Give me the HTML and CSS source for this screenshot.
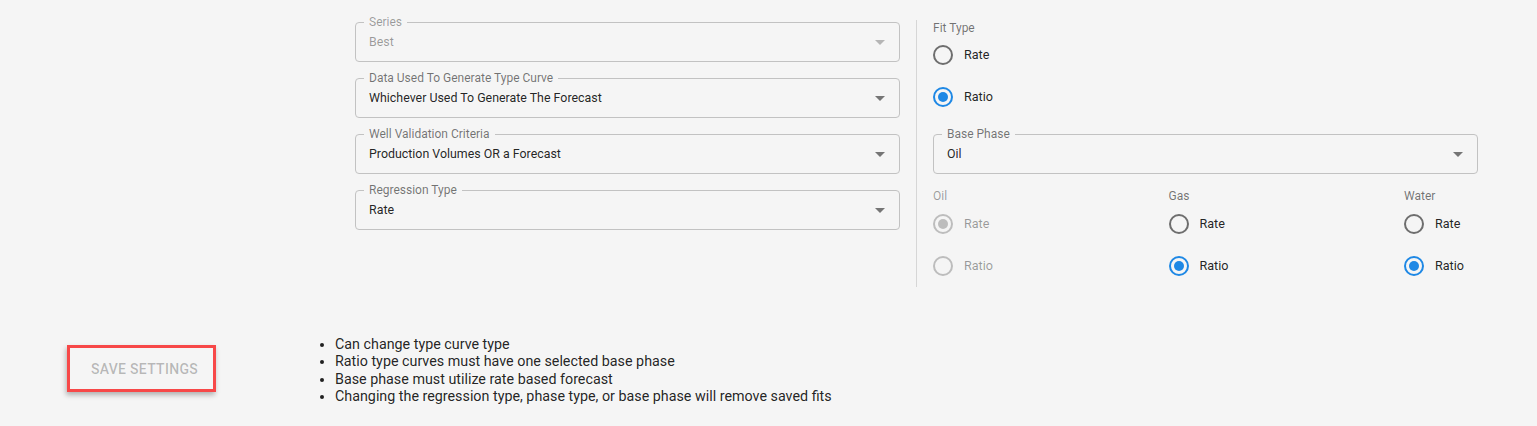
FILE: index.html
```html
<!DOCTYPE html>
<html>
<head>
<meta charset="utf-8">
<link rel="stylesheet" href="styles.css">
</head>
<body>
<div class="page">
  <div class="form">
    <div class="col-left">
      <div class="select disabled">
        <span class="select-label">Series</span>
        <span class="select-value">Best</span>
        <span class="arrow"></span>
      </div>
      <div class="select">
        <span class="select-label">Data Used To Generate Type Curve</span>
        <span class="select-value">Whichever Used To Generate The Forecast</span>
        <span class="arrow"></span>
      </div>
      <div class="select">
        <span class="select-label">Well Validation Criteria</span>
        <span class="select-value">Production Volumes OR a Forecast</span>
        <span class="arrow"></span>
      </div>
      <div class="select">
        <span class="select-label">Regression Type</span>
        <span class="select-value">Rate</span>
        <span class="arrow"></span>
      </div>
    </div>
    <div class="divider"></div>
    <div class="col-right">
      <div class="group-label">Fit Type</div>
      <div class="radio-row"><span class="radio"></span><span class="radio-text">Rate</span></div>
      <div class="radio-row"><span class="radio checked"></span><span class="radio-text">Ratio</span></div>
      <div class="select base">
        <span class="select-label">Base Phase</span>
        <span class="select-value">Oil</span>
        <span class="arrow"></span>
      </div>
      <div class="phases">
        <div class="phase disabled">
          <div class="group-label">Oil</div>
          <div class="radio-row"><span class="radio checked"></span><span class="radio-text">Rate</span></div>
          <div class="radio-row"><span class="radio"></span><span class="radio-text">Ratio</span></div>
        </div>
        <div class="phase">
          <div class="group-label">Gas</div>
          <div class="radio-row"><span class="radio"></span><span class="radio-text">Rate</span></div>
          <div class="radio-row"><span class="radio checked"></span><span class="radio-text">Ratio</span></div>
        </div>
        <div class="phase">
          <div class="group-label">Water</div>
          <div class="radio-row"><span class="radio"></span><span class="radio-text">Rate</span></div>
          <div class="radio-row"><span class="radio checked"></span><span class="radio-text">Ratio</span></div>
        </div>
      </div>
    </div>
  </div>
  <div class="bottom">
    <div class="save-btn">SAVE SETTINGS</div>
    <ul class="notes">
      <li>Can change type curve type</li>
      <li>Ratio type curves must have one selected base phase</li>
      <li>Base phase must utilize rate based forecast</li>
      <li>Changing the regression type, phase type, or base phase will remove saved fits</li>
    </ul>
  </div>
</div>
</body>
</html>
```

FILE: styles.css
```css
html, body {
  margin: 0;
  padding: 0;
  background: #f5f5f5;
}
body {
  font-family: Roboto, "Liberation Sans", Arial, sans-serif;
  color: rgba(0, 0, 0, 0.87);
  width: 1537px;
  height: 426px;
  overflow: hidden;
}
.page {
  padding-top: 20px;
}
.form {
  display: flex;
  padding-left: 355px;
}
.col-left {
  width: 545px;
  padding-top: 2px;
  display: flex;
  flex-direction: column;
  gap: 16px;
}
.select {
  position: relative;
  box-sizing: border-box;
  height: 40px;
  border: 1px solid #c2c2c2;
  border-radius: 4px;
  display: flex;
  align-items: center;
  padding: 0 14px 0 13px;
}
.select-label {
  position: absolute;
  left: 8px;
  top: -8px;
  padding: 0 5px;
  background: #f5f5f5;
  font-size: 12px;
  line-height: 14px;
  color: rgba(0, 0, 0, 0.54);
}
.select-value {
  flex: 1;
  font-size: 12.4px;
  line-height: 16px;
  padding-bottom: 1px;
}
.arrow {
  width: 0;
  height: 0;
  border-left: 5px solid transparent;
  border-right: 5px solid transparent;
  border-top: 5px solid #757575;
  margin-top: 1px;
}
.select.disabled .select-value,
.select.disabled .select-label {
  color: rgba(0, 0, 0, 0.38);
}
.select.disabled .arrow {
  border-top-color: #b5b5b5;
}
.divider {
  width: 1px;
  background: #d6d6d6;
  margin: 0 16px;
  flex-shrink: 0;
}
.col-right {
  width: 545px;
  display: flex;
  flex-direction: column;
}
.group-label {
  font-size: 12px;
  line-height: 14px;
  color: rgba(0, 0, 0, 0.54);
  padding-top: 1px;
  margin-bottom: -1px;
}
.phase .group-label {
  padding-top: 0;
  margin-bottom: 0;
}
.radio-row {
  display: flex;
  align-items: center;
  height: 42px;
}
.radio {
  box-sizing: border-box;
  width: 20px;
  height: 20px;
  border: 2px solid #6e6e6e;
  border-radius: 50%;
  margin-right: 11px;
  display: flex;
  align-items: center;
  justify-content: center;
}
.radio.checked {
  border-color: #1e88e5;
}
.radio.checked::after {
  content: "";
  width: 10px;
  height: 10px;
  border-radius: 50%;
  background: #1e88e5;
}
.radio-text {
  font-size: 12.6px;
  line-height: 16px;
}
.select.base {
  margin-top: 16px;
}
.phases {
  display: flex;
  justify-content: space-between;
  margin-top: 15px;
}
.phase {
  width: 74px;
}
.phase.disabled .group-label,
.phase.disabled .radio-text {
  color: rgba(0, 0, 0, 0.38);
}
.phase.disabled .radio {
  border-color: #bdbdbd;
}
.phase.disabled .radio.checked::after {
  background: #bdbdbd;
}
.bottom {
  display: flex;
  align-items: center;
  margin-top: 49px;
  padding-left: 67px;
}
.save-btn {
  box-sizing: border-box;
  width: 149px;
  height: 47px;
  margin-bottom: 4px;
  border: 3px solid #f74848;
  box-shadow: -1px 3px 5px rgba(0, 0, 0, 0.28);
  display: flex;
  align-items: center;
  justify-content: center;
  font-size: 14px;
  font-weight: 500;
  letter-spacing: 0.3px;
  color: rgba(0, 0, 0, 0.26);
  padding-top: 1px;
  padding-left: 6px;
}
.notes {
  margin: 0 0 0 79px;
  padding-left: 40px;
  font-size: 14.3px;
  line-height: 17.4px;
  color: rgba(0, 0, 0, 0.87);
}
```
